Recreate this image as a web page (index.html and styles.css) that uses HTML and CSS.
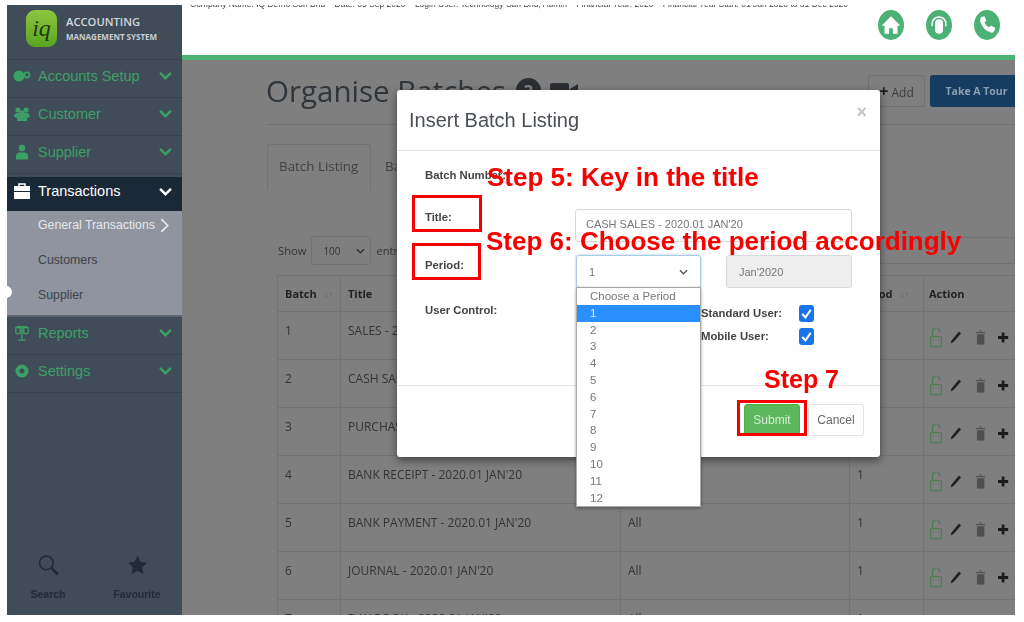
FILE: index.html
```html
<!DOCTYPE html>
<html lang="en">

<head>
  <meta charset="UTF-8" />
  <title>Organise Batches</title>
  <link rel="stylesheet" href="styles.css">
</head>

<body>
  <div class="shot">
    <!-- Sidebar -->
    <aside class="sidebar">
      <div class="brand">
        <div class="logo"><span class="logo-text">iq</span></div>
        <div class="brand-text">
          <div class="brand-top">ACCOUNTING</div>
          <div class="brand-sub">MANAGEMENT SYSTEM</div>
        </div>
      </div>

      <a class="nav-item">
        <svg class="nav-icon" viewBox="0 0 18 14"><circle cx="6" cy="7" r="5.5" fill="currentColor"/><circle cx="14" cy="6" r="2.6" fill="none" stroke="currentColor" stroke-width="1.6"/></svg>
        <span>Accounts Setup</span>
        <svg class="chev" viewBox="0 0 12 8"><path d="M1 1.5l5 5 5-5" fill="none" stroke="currentColor" stroke-width="2.2"/></svg>
      </a>
      <a class="nav-item">
        <svg class="nav-icon" viewBox="0 0 18 14"><circle cx="5" cy="3" r="2.6" fill="currentColor"/><circle cx="13" cy="3" r="2.6" fill="currentColor"/><circle cx="9" cy="6" r="2.6" fill="currentColor"/><path d="M1 10q0-4 4-4h8q4 0 4 4l-3 1v3H4v-3z" fill="currentColor"/></svg>
        <span>Customer</span>
        <svg class="chev" viewBox="0 0 12 8"><path d="M1 1.5l5 5 5-5" fill="none" stroke="currentColor" stroke-width="2.2"/></svg>
      </a>
      <a class="nav-item">
        <svg class="nav-icon" viewBox="0 0 18 15"><circle cx="9" cy="3.5" r="3.3" fill="currentColor"/><path d="M3 15v-3q0-4 4-4h4q4 0 4 4v3z" fill="currentColor"/></svg>
        <span>Supplier</span>
        <svg class="chev" viewBox="0 0 12 8"><path d="M1 1.5l5 5 5-5" fill="none" stroke="currentColor" stroke-width="2.2"/></svg>
      </a>
      <a class="nav-item active">
        <svg class="nav-icon" viewBox="0 0 18 16"><path d="M6 3V1h6v2" fill="none" stroke="currentColor" stroke-width="1.5"/><path d="M1 3h16v5H1zM1 9h16v7H1z" fill="currentColor"/></svg>
        <span>Transactions</span>
        <svg class="chev" viewBox="0 0 12 8"><path d="M1 1.5l5 5 5-5" fill="none" stroke="currentColor" stroke-width="2.2"/></svg>
      </a>
      <div class="submenu">
        <a class="sub-item current">General Transactions
          <svg class="sub-arrow" viewBox="0 0 8 14"><path d="M1 1l6 6-6 6" fill="none" stroke="currentColor" stroke-width="1.6"/></svg>
        </a>
        <a class="sub-item">Customers</a>
        <a class="sub-item">Supplier</a>
      </div>
      <a class="nav-item">
        <svg class="nav-icon" viewBox="0 0 18 18"><path d="M3 2h12M9 1v15M5 17h8" fill="none" stroke="currentColor" stroke-width="1.6"/><path d="M2 3h5v6q-2.500 2-5 0zM11 3h5v6q-2.500 2-5 0z" fill="none" stroke="currentColor" stroke-width="1.4"/></svg>
        <span>Reports</span>
        <svg class="chev" viewBox="0 0 12 8"><path d="M1 1.5l5 5 5-5" fill="none" stroke="currentColor" stroke-width="2.2"/></svg>
      </a>
      <a class="nav-item">
        <svg class="nav-icon" viewBox="0 0 18 14"><circle cx="9" cy="7" r="4.500" fill="none" stroke="currentColor" stroke-width="4"/></svg>
        <span>Settings</span>
        <svg class="chev" viewBox="0 0 12 8"><path d="M1 1.5l5 5 5-5" fill="none" stroke="currentColor" stroke-width="2.2"/></svg>
      </a>

      <div class="side-foot">
        <div class="foot-item">
          <svg class="foot-icon" viewBox="0 0 20 20"><circle cx="8" cy="8" r="6.500" fill="none" stroke="#1f2c38" stroke-width="1.500"/><path d="M13 13l6 6" stroke="#1f2c38" stroke-width="2.500"/></svg>
          <span>Search</span>
        </div>
        <div class="foot-item">
          <svg class="foot-icon" viewBox="0 0 20 20"><path d="M10 1l2.800 6 6.200.8-4.500 4.300 1.200 6.400L10 15.400l-5.700 3.100 1.200-6.400L1 7.800 7.200 7z" fill="#1f2c38"/></svg>
          <span>Favourite</span>
        </div>
      </div>
    </aside>
    <div class="side-dot"></div>

    <div class="main">
      <!-- Top bar -->
      <header class="topbar">
        <p class="company">Company Name: IQ Demo Sdn Bhd &nbsp;&nbsp; Date: 05 Sep 2020 &nbsp;&nbsp; Login User: Technology Sdn Bhd, Admin &nbsp;&nbsp; Financial Year: 2020 &nbsp;&nbsp; Financial Year Start: 01 Jan 2020 to 31 Dec 2020</p>
        <div class="top-icons">
          <span class="round-icon"><svg viewBox="0 0 16 16"><path d="M8 1L0.500 8.500h2.300V15h3.700v-4.500h3V15h3.700V8.500h2.300z" fill="#fff"/></svg></span>
          <span class="round-icon"><svg viewBox="0 0 16 16"><path d="M2.500 9V7a5.500 5.500 0 0 1 11 0v2" fill="none" stroke="#fff" stroke-width="1.200"/><path d="M4.800 6.500a3.200 3.200 0 0 1 6.400 0v5.500q0 3-3.200 3t-3.200-3z" fill="#fff"/></svg></span>
          <span class="round-icon"><svg viewBox="0 0 16 16"><path d="M3.500 1.500l2.500-.5 1.500 3.500L6 6q.8 2.500 3.500 4l1.500-1.500 3.500 1.500-.5 2.500q-1 2-3 1.500Q5 12.500 2.500 5q-.5-2 1-3.500z" fill="#fff"/></svg></span>
        </div>
      </header>

      <div class="content">
        <div class="title-row">
          <h1>Organise Batches</h1>
          <span class="help-icon">?</span>
          <svg class="cam-icon" viewBox="0 0 28 20"><rect x="0" y="2" width="19" height="16" rx="2" fill="#2b2f33"/><path d="M20 8l8-5v14l-8-5z" fill="#2b2f33"/></svg>
          <div class="title-btns">
            <button class="btn-add"><b>+</b> Add</button>
            <button class="btn-tour">Take A Tour</button>
          </div>
        </div>

        <div class="tabs">
          <div class="tab active">Batch Listing</div>
          <div class="tab">Batch Summary</div>
        </div>

        <div class="show-row">
          <span>Show</span>
          <span class="show-select">100 <svg class="sel-arrow" viewBox="0 0 10 6"><path d="M1 1l4 4 4-4" fill="none" stroke="#333" stroke-width="1.500"/></svg></span>
          <span>entries</span>
          <span class="search-box"></span>
        </div>

        <table class="batch-table">
          <colgroup>
            <col class="col-batch"><col class="col-title"><col class="col-user"><col class="col-period"><col class="col-action">
          </colgroup>
          <thead>
            <tr>
              <th>Batch <span class="sort">↓↑</span></th>
              <th>Title</th>
              <th>User Control</th>
              <th>Period <span class="sort">↓↑</span></th>
              <th>Action</th>
            </tr>
          </thead>
          <tbody id="rows"></tbody>
        </table>
      </div>
    </div>

    <!-- Modal -->
    <div class="modal">
      <div class="modal-head">
        <h2>Insert Batch Listing</h2>
        <span class="modal-close">×</span>
      </div>
      <div class="modal-body">
        <div class="form-row row-number">
          <label>Batch Number:</label>
          <span></span>
        </div>
        <div class="form-row row-title">
          <label>Title:</label>
          <div class="input-field title-input">CASH SALES - 2020.01 JAN'20</div>
        </div>
        <div class="form-row row-period">
          <label>Period:</label>
          <div class="period-fields">
            <div class="input-field period-select">1
              <svg class="sel-arrow" viewBox="0 0 10 6"><path d="M1 1l4 4 4-4" fill="none" stroke="#555" stroke-width="1.500"/></svg>
            </div>
            <div class="input-field period-month">Jan'2020</div>
          </div>
        </div>
        <div class="form-row row-user">
          <label>User Control:</label>
          <div class="checks">
            <div class="check-line"><label>Standard User:</label><span class="checkbox"><svg viewBox="0 0 14 14"><path d="M3 7.500l3 3 5-7" fill="none" stroke="#fff" stroke-width="2"/></svg></span></div>
            <div class="check-line"><label>Mobile User:</label><span class="checkbox"><svg viewBox="0 0 14 14"><path d="M3 7.500l3 3 5-7" fill="none" stroke="#fff" stroke-width="2"/></svg></span></div>
          </div>
        </div>
      </div>
      <div class="modal-foot">
        <button class="btn-submit">Submit</button>
        <button class="btn-cancel">Cancel</button>
      </div>

      <ul class="period-list">
        <li>Choose a Period</li>
        <li class="selected">1</li>
        <li>2</li>
        <li>3</li>
        <li>4</li>
        <li>5</li>
        <li>6</li>
        <li>7</li>
        <li>8</li>
        <li>9</li>
        <li>10</li>
        <li>11</li>
        <li>12</li>
      </ul>
    </div>

    <!-- Tutorial annotations -->
    <div class="step step-5">Step 5: Key in the title</div>
    <div class="step step-6">Step 6: Choose the period accordingly</div>
    <div class="step step-7">Step 7</div>
    <div class="mark mark-title"></div>
    <div class="mark mark-period"></div>
    <div class="mark mark-submit"></div>
  </div>

  <script src="rows.js"></script>
</body>

</html>
```

FILE: rows.js
```js
var batches = [
  ["1", "SALES - 2020.01 JAN'20", "All", "1"],
  ["2", "CASH SALES - 2020.01 JAN'20", "All", "1"],
  ["3", "PURCHASE - 2020.01 JAN'20", "All", "1"],
  ["4", "BANK RECEIPT - 2020.01 JAN'20", "All", "1"],
  ["5", "BANK PAYMENT - 2020.01 JAN'20", "All", "1"],
  ["6", "JOURNAL - 2020.01 JAN'20", "All", "1"],
  ["7", "DAY BOOK - 2020.01 JAN'20", "All", "1"]
];

var actions =
  '<div class="actions">' +
  '<svg class="act-lock" viewBox="0 0 12 21"><path d="M2.500 10V5a3.500 3.500 0 0 1 7 0v1" fill="none" stroke="#4a7f50" stroke-width="1.200"/><rect x="0.600" y="10" width="10.800" height="10" rx="1.500" fill="none" stroke="#4a7f50" stroke-width="1.200"/></svg>' +
  '<svg class="act-pen" viewBox="0 0 12 14"><path d="M9 1l2 2-7.500 8.500L0.500 13l1-3z" fill="#222"/></svg>' +
  '<svg class="act-bin" viewBox="0 0 10 16"><path d="M0 2.500h10v1.500H0zM3.500 1h3v1h-3zM1 5h8v11H1z" fill="#4f4f4f"/></svg>' +
  '<svg class="act-plus" viewBox="0 0 11 11"><path d="M4 0h3v4h4v3H7v4H4V7H0V4h4z" fill="#1c1c1c"/></svg>' +
  '</div>';

var html = "";
batches.forEach(function (b) {
  html += "<tr><td>" + b[0] + "</td><td>" + b[1] + "</td><td>" + b[2] + "</td><td>" + b[3] + "</td><td>" + actions + "</td></tr>";
});
document.getElementById("rows").innerHTML = html;
```

FILE: styles.css
```css
* {
  box-sizing: border-box;
}

body {
  margin: 0;
  background: white;
  font-family: 'Liberation Sans', Arial, sans-serif;
  overflow: hidden;
}

.shot {
  position: relative;
  display: flex;
  width: 1008px;
  height: 610px;
  margin: 5px 0 0 7px;
  overflow: hidden;
  filter: blur(0.7px);
}

/* Sidebar */
.sidebar {
  display: flex;
  flex-direction: column;
  flex: 0 0 175px;
  background: #414c59;
  color: #3ba065;
}

.brand {
  display: flex;
  align-items: center;
  height: 55px;
  padding: 0 0 8px 19px;
  gap: 9px;
  border-bottom: 1px solid #38424e;
}

.logo {
  display: flex;
  align-items: center;
  justify-content: center;
  width: 31px;
  height: 37px;
  border-radius: 9px;
  background: linear-gradient(#8cc63f, #5aa51f);
}

.logo-text {
  font: italic 400 24px 'Liberation Serif', serif;
  color: #22380c;
}

.brand-top {
  font: 600 11.2px 'Open Sans', sans-serif;
  color: #d3d6da;
  margin-bottom: 2px;
}

.brand-sub {
  font: 700 8px 'Open Sans', sans-serif;
  color: #c9cdd2;
  white-space: nowrap;
}

.nav-item {
  display: flex;
  align-items: center;
  height: 38px;
  padding: 0 10px 6px 6px;
  font-size: 14.5px;
  border-bottom: 1px solid #38424e;
}

.nav-item span {
  flex: 1;
  margin-left: 7px;
}

.nav-icon {
  width: 18px;
  height: 16px;
}

.chev {
  width: 13px;
  height: 9px;
}

.nav-item.active {
  height: 34px;
  margin-top: 3px;
  padding-bottom: 6px;
  background: #1b2835;
  color: white;
  border-bottom: 0;
}

.submenu {
  display: flex;
  flex-direction: column;
  gap: 7px;
  height: 106px;
  background: #8f949e;
  border-bottom: 2px solid #5f6670;
}

.sub-item {
  display: flex;
  align-items: center;
  height: 28px;
  padding-left: 31px;
  font-size: 12.3px;
  color: #3e434b;
}

.sub-item.current {
  color: #e6e7ea;
}

.sub-arrow {
  width: 9px;
  height: 15px;
  margin-left: 5px;
}

.side-foot {
  display: flex;
  margin-top: auto;
  padding-bottom: 15px;
}

.foot-item {
  display: flex;
  flex-direction: column;
  align-items: center;
  flex: 0 0 82px;
  gap: 12px;
  font-size: 10.5px;
  font-weight: 700;
  color: #222d38;
}

.foot-item + .foot-item {
  margin-left: 7px;
}

.foot-icon {
  width: 21px;
  height: 22px;
}

.side-dot {
  position: absolute;
  left: -7px;
  top: 281px;
  width: 12px;
  height: 12px;
  border-radius: 50%;
  background: white;
}

/* Main */
.main {
  flex: 1;
  min-width: 0;
  display: flex;
  flex-direction: column;
}

.topbar {
  position: relative;
  display: flex;
  justify-content: flex-end;
  height: 55px;
  padding-top: 5px;
  background: white;
  border-bottom: 5px solid #4bb174;
}

.company {
  position: absolute;
  left: 8px;
  top: -6px;
  margin: 0;
  font-size: 8.5px;
  line-height: 10px;
  color: #444;
  white-space: nowrap;
}

.top-icons {
  display: flex;
  gap: 22px;
  padding-right: 15px;
}

.round-icon {
  display: flex;
  align-items: center;
  justify-content: center;
  width: 26px;
  height: 30px;
  border-radius: 50%;
  background: #4bb174;
}

.round-icon svg {
  width: 20px;
  height: 20px;
}

.content {
  flex: 1;
  padding-left: 84px;
  background: #7f7f7f;
  color: #353535;
  font-family: 'Open Sans', sans-serif;
  font-size: 12px;
  overflow: hidden;
}

.title-row {
  display: flex;
  align-items: center;
  height: 50px;
  margin-top: 15px;
  padding-bottom: 18px;
  border-bottom: 1px solid #727272;
}

h1 {
  margin: 0;
  font-size: 29.5px;
  font-weight: 400;
  line-height: 32px;
  color: #2f353b;
}

.help-icon {
  display: flex;
  align-items: center;
  justify-content: center;
  width: 25px;
  height: 25px;
  margin-left: 10px;
  border-radius: 50%;
  background: #2b2f33;
  color: #7f7f7f;
  font-weight: 700;
  font-size: 18px;
}

.cam-icon {
  width: 28px;
  height: 20px;
  margin-left: 9px;
}

.title-btns {
  display: flex;
  gap: 5px;
  margin-left: auto;
}

.btn-add {
  width: 57px;
  height: 32px;
  padding: 0;
  background: #7f7f7f;
  border: 1px solid #717171;
  border-radius: 3px;
  font: 12px 'Open Sans', sans-serif;
  color: #3c3c3c;
}

.btn-add b {
  font-size: 16px;
  color: #1d1d1d;
}

.btn-tour {
  width: 85px;
  height: 32px;
  padding: 0 0 0 8px;
  background: #173c61;
  border: 0;
  border-radius: 3px 0 0 3px;
  font: 700 10.5px 'Open Sans', sans-serif;
  color: #8a9fb2;
}

.tabs {
  display: flex;
  height: 46px;
  margin-top: 19px;
  margin-left: 1px;
}

.tab {
  display: flex;
  align-items: center;
  padding: 0 0 3px 11px;
  font-size: 13.4px;
  color: #424242;
}

.tab.active {
  width: 104px;
  margin-right: 3px;
  border: 1px solid #737373;
  border-bottom: 0;
  border-radius: 3px 3px 0 0;
}

.show-row {
  display: flex;
  align-items: center;
  gap: 5px;
  height: 29px;
  margin-top: 46px;
  padding-left: 12px;
  font-size: 11.2px;
}

.show-select {
  display: flex;
  align-items: center;
  justify-content: space-between;
  width: 60px;
  height: 29px;
  padding: 0 5px 0 11px;
  border: 1px solid #727272;
  border-radius: 3px;
  font-size: 10px;
}

.sel-arrow {
  width: 9px;
  height: 6px;
}

.search-box {
  width: 135px;
  height: 27px;
  margin-left: auto;
  border: 1px solid #727272;
}

.batch-table {
  width: 738px;
  margin: 10px 0 0 11px;
  border-collapse: collapse;
  table-layout: fixed;
}

.col-batch { width: 63px; }
.col-title { width: 280px; }
.col-user { width: 229px; }
.col-period { width: 74px; }
.col-action { width: 92px; }

.batch-table th {
  height: 36px;
  padding: 0 7px;
  border: 1px solid #737373;
  border-right: 0;
  font-size: 11px;
  font-weight: 700;
  text-align: left;
  color: #232323;
  white-space: nowrap;
}

.batch-table td {
  height: 48px;
  padding: 10px 7px 0;
  border: 1px solid #737373;
  border-right: 0;
  vertical-align: top;
  line-height: 17px;
  white-space: nowrap;
}

.batch-table th:last-child {
  padding-left: 5px;
}

.sort {
  margin-left: 4px;
  font-weight: 400;
  font-size: 10px;
  color: #666;
}

.actions {
  display: flex;
  align-items: center;
  height: 24px;
  margin-top: 3px;
  margin-left: -1px;
}

.act-lock {
  width: 13px;
  height: 22px;
}

.act-pen {
  width: 13px;
  height: 15px;
  margin-left: 8px;
}

.act-bin {
  width: 10px;
  height: 16px;
  margin-left: 14px;
}

.act-plus {
  width: 11px;
  height: 11px;
  margin-left: 13px;
}

/* Modal */
.modal {
  position: absolute;
  left: 390px;
  top: 85px;
  display: flex;
  flex-direction: column;
  width: 483px;
  height: 367px;
  background: white;
  border-radius: 3px;
  box-shadow: 0 3px 9px rgba(0, 0, 0, 0.5);
}

.modal-head {
  display: flex;
  align-items: center;
  justify-content: space-between;
  height: 61px;
  padding: 0 13px 0 12px;
  border-bottom: 1px solid #e5e5e5;
}

.modal-head h2 {
  margin: 0;
  font-size: 20px;
  font-weight: 400;
  color: #4a4f55;
}

.modal-close {
  margin-bottom: 16px;
  font-size: 18px;
  font-weight: 700;
  color: #c4c4c4;
}

.modal-body {
  height: 235px;
  padding: 18px 0 0 28px;
  border-bottom: 1px solid #e5e5e5;
}

.form-row {
  display: grid;
  grid-template-columns: 151px auto;
  align-items: start;
}

.form-row label {
  font-size: 11.3px;
  font-weight: 700;
  color: #444;
  white-space: nowrap;
}

.row-number {
  height: 20px;
}

.row-title {
  margin-top: 20px;
}

.row-title label {
  line-height: 16px;
}

.row-period {
  margin-top: 13px;
}

.row-period label {
  line-height: 20px;
}

.row-user {
  margin-top: 16px;
}

.input-field {
  display: flex;
  align-items: center;
  height: 33px;
  padding: 0 12px;
  border: 1px solid #d9d9d9;
  border-radius: 3px;
  font-size: 11px;
  color: #777;
}

.title-input {
  width: 277px;
  margin-left: -1px;
  padding-left: 10px;
  padding-bottom: 3px;
}

.period-fields {
  display: flex;
  gap: 25px;
}

.period-select {
  justify-content: space-between;
  width: 125px;
  border-color: #a9cbe6;
  box-shadow: 0 0 3px #9cc5e6;
}

.period-month {
  width: 126px;
  background: #eeeeee;
}

.checks {
  display: flex;
  flex-direction: column;
  gap: 5px;
  margin-left: 125px;
}

.check-line {
  display: flex;
  align-items: center;
  justify-content: space-between;
  width: 113px;
  height: 18px;
}

.checkbox {
  display: flex;
  width: 15px;
  height: 17px;
  border-radius: 3px;
  background: #1a73e8;
}

.modal-foot {
  display: flex;
  justify-content: flex-end;
  gap: 8px;
  padding: 18px 16px 0 0;
}

.btn-submit,
.btn-cancel {
  width: 56px;
  height: 32px;
  padding: 0;
  border-radius: 3px;
  font: 12px 'Liberation Sans', Arial, sans-serif;
}

.btn-submit {
  background: #5cb85c;
  border: 1px solid #4cae4c;
  color: #d5ecd5;
}

.btn-cancel {
  background: white;
  border: 1px solid #e2e2e2;
  color: #666;
}

.period-list {
  position: absolute;
  left: 179px;
  top: 197px;
  width: 125px;
  height: 220px;
  margin: 0;
  padding: 0;
  list-style: none;
  background: white;
  border: 1px solid #aaa;
  box-shadow: 0 1px 3px rgba(0, 0, 0, 0.4);
  font-size: 11.5px;
  line-height: 16.8px;
  color: #777;
}

.period-list li {
  padding-left: 13px;
}

.period-list .selected {
  background: #2a8fff;
  color: #d9ebff;
}

/* Annotations */
.step {
  position: absolute;
  font-size: 26px;
  font-weight: 700;
  line-height: 28px;
  color: #f80000;
  white-space: nowrap;
}

.step-5 {
  left: 480px;
  top: 158px;
}

.step-6 {
  left: 479px;
  top: 222px;
}

.step-7 {
  left: 757px;
  top: 360px;
  font-size: 25px;
}

.mark {
  position: absolute;
  border: 3px solid #f80000;
}

.mark-title {
  left: 405px;
  top: 190px;
  width: 70px;
  height: 37px;
}

.mark-period {
  left: 405px;
  top: 238px;
  width: 69px;
  height: 37px;
}

.mark-submit {
  left: 730px;
  top: 395px;
  width: 70px;
  height: 36px;
}
```
